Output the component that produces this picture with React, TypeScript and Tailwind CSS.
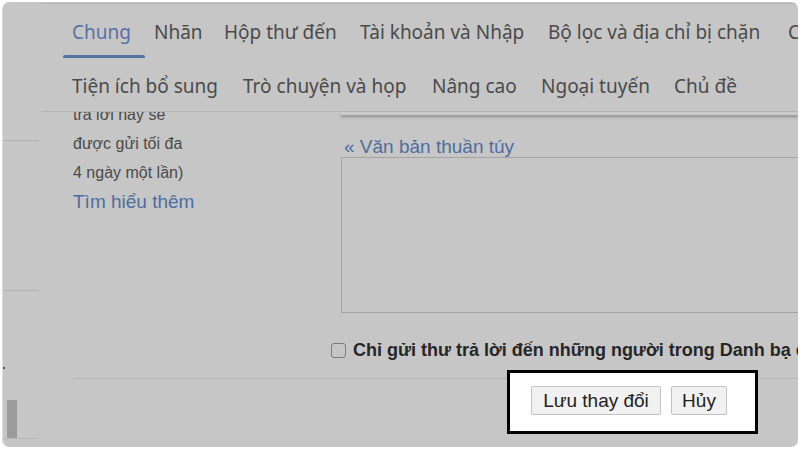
const row1 = [
  { label: "Chung", w: "w-[82px]", active: true },
  { label: "Nhãn", w: "w-[70px]" },
  { label: "Hộp thư đến", w: "w-[136px]" },
  { label: "Tài khoản và Nhập", w: "w-[188px]" },
  { label: "Bộ lọc và địa chỉ bị chặn", w: "w-[240px]" },
  { label: "Chuyển tiếp và POP/IMAP", w: "w-[240px]" },
];

const row2 = [
  { label: "Tiện ích bổ sung", w: "w-[171px]" },
  { label: "Trò chuyện và họp", w: "w-[189px]" },
  { label: "Nâng cao", w: "w-[109px]" },
  { label: "Ngoại tuyến", w: "w-[133px]" },
  { label: "Chủ đề", w: "w-[120px]" },
];

const tabFont = "font-['Noto_Sans',sans-serif]";
const arial = "font-['Liberation_Sans',Arial,sans-serif]";

function Sidebar() {
  return (
    <div className="w-[38px] shrink-0 flex flex-col">
      <div className="mt-[138px] h-px w-[36px] bg-[#b2b2b2]" />
      <div className="mt-[149px] h-px w-[36px] bg-[#b2b2b2]" />
      <div className="mt-[76px] h-[2px] w-[2px] bg-[#555]" />
      <div className="mt-[31px] ml-[4px] h-[38px] w-[10px] bg-[#9b9b9b]" />
      <div className="h-px w-[36px] bg-[#b8b8b8]" />
    </div>
  );
}

function Header() {
  return (
    <div className={`mt-[1px] border-t border-b border-[#b4b4b4] ${tabFont}`}>
      <div className="flex h-[54px] pl-[22px] whitespace-nowrap">
        {row1.map((t) => (
          <div key={t.label} className={`${t.w} shrink-0 flex flex-col`}>
            <div
              className={`pl-[9px] pt-[15px] text-[19px] leading-[26px] ${
                t.active ? "text-[#5572a4]" : "text-[#4a4a4a]"
              }`}
            >
              {t.label}
            </div>
            <div className="flex-1" />
            {t.active && <div className="h-[3px] bg-[#5672a3] rounded-t-[2px]" />}
          </div>
        ))}
      </div>
      <div className="flex h-[53px] pl-[22px] whitespace-nowrap">
        {row2.map((t) => (
          <div key={t.label} className={`${t.w} shrink-0`}>
            <div className="pl-[9px] pt-[15px] text-[19px] leading-[26px] text-[#4a4a4a]">
              {t.label}
            </div>
          </div>
        ))}
      </div>
    </div>
  );
}

function Body() {
  return (
    <div className="flex">
      <div className={`w-[290px] shrink-0 pl-[32px] ${arial} text-[#4a4a4a] overflow-hidden`}>
        <div className="-mt-[12px] text-[16px] leading-[29px]">
          <div>trả lời này sẽ</div>
          <div>được gửi tối đa</div>
          <div>4 ngày một lần)</div>
          <div className="text-[19px] text-[#4e6d9f]">Tìm hiểu thêm</div>
        </div>
      </div>
      <div className="flex-1 min-w-0 flex flex-col">
        <div className="ml-[10px] h-[3px] bg-[#cbcbcb] shadow-[0_2px_3px_rgba(0,0,0,0.3)]" />
        <div className={`ml-[13px] mt-[22px] text-[19px] leading-[20px] text-[#4e6d9f] ${arial}`}>
          « Văn bản thuần túy
        </div>
        <div className="ml-[10px] h-[156px] border border-r-0 border-[#a3a3a3]" />
        <div className="mt-[27px] h-[20px] flex items-center whitespace-nowrap">
          <div className="w-[15px] h-[15px] shrink-0 rounded-[3px] border border-[#7c7c7c]" />
          <span className={`ml-[7px] text-[18px] font-bold text-[#262626] ${arial}`}>
            Chỉ gửi thư trả lời đến những người trong Danh bạ của tôi
          </span>
        </div>
      </div>
    </div>
  );
}

function Buttons() {
  return (
    <div className="relative ml-[466px] -mt-[9px] w-[251px] h-[64px] border-[3px] border-black bg-white flex gap-[10px] pl-[21px] pt-[13px]">
      <button className={`w-[130px] h-[29px] rounded-[2px] border border-[#c2c2c2] bg-[#f1f1f1] text-[19px] leading-[27px] text-[#222] ${arial}`}>
        Lưu thay đổi
      </button>
      <button className={`w-[56px] h-[29px] rounded-[2px] border border-[#c2c2c2] bg-[#f1f1f1] text-[19px] leading-[27px] text-[#222] ${arial}`}>
        Hủy
      </button>
    </div>
  );
}

export default function App() {
  return (
    <div className="w-[800px] h-[450px] bg-white p-[2px] pb-[3px]">
      <div className="h-full rounded-[7px] bg-[#c6c6c6] border-l border-[#dedede] overflow-hidden flex">
        <Sidebar />
        <div className="flex-1 min-w-0 flex flex-col">
          <Header />
          <Body />
          <div className="mt-[18px] ml-[32px] h-px bg-[#b4b4b4]" />
          <Buttons />
        </div>
      </div>
    </div>
  );
}
